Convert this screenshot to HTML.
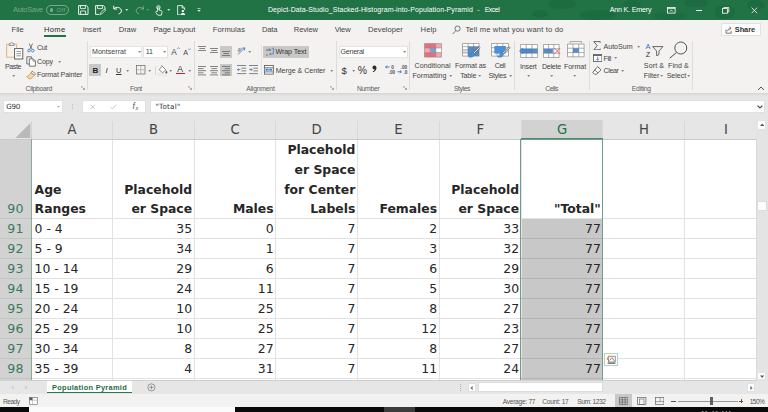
<!DOCTYPE html>
<html lang="en"><head><meta charset="utf-8"><title>Excel - Population Pyramid</title>
<style>
html,body{margin:0;padding:0;background:#f3f2f1;}
body{width:768px;height:412px;overflow:hidden;position:relative;}
#app{position:absolute;left:0;top:0;width:768px;height:412px;overflow:hidden;background:#f3f2f1;}
.b{position:absolute;display:block;}
.t{position:absolute;white-space:nowrap;display:block;}
.u{font-family:"Liberation Sans",sans-serif;}
.c{font-family:"DejaVu Sans","Liberation Sans",sans-serif;}
</style></head><body><div id="app">
<div class="b" style="left:0.0px;top:0.0px;width:768.0px;height:20.0px;background:#217346;"></div>
<div class="b" style="left:0.0px;top:20.0px;width:768.0px;height:72.6px;background:#f3f2f1;"></div>
<div class="b" style="left:0.0px;top:92.6px;width:768.0px;height:27.4px;background:#e6e6e6;"></div>
<div class="b" style="left:0.0px;top:92.6px;width:768.0px;height:3.0px;background:linear-gradient(#d4d4d4,#e6e6e6);"></div>
<svg class="b" style="left:520.0px;top:0.0px;" width="248" height="20" viewBox="0 0 248 20"><g fill="rgba(0,40,20,.10)"><ellipse cx="42" cy="4" rx="14" ry="5"/><ellipse cx="78" cy="15" rx="18" ry="5"/><ellipse cx="112" cy="5" rx="9" ry="6"/><ellipse cx="150" cy="16" rx="16" ry="4"/>
<ellipse cx="176" cy="3" rx="12" ry="4"/><ellipse cx="205" cy="12" rx="10" ry="7"/><ellipse cx="236" cy="5" rx="9" ry="5"/><ellipse cx="20" cy="14" rx="8" ry="4"/></g></svg>
<span class="t u" style="top:5px;font-size:7.4px;line-height:10px;color:rgba(255,255,255,.38);left:13.0px;letter-spacing:-0.26px;">AutoSave</span>
<div class="b" style="left:46.0px;top:5.2px;width:23.0px;height:9.4px;border:1px solid rgba(255,255,255,.38);box-sizing:border-box;border-radius:5px;"></div>
<div class="b" style="left:49.5px;top:8.2px;width:3.4px;height:3.4px;background:rgba(255,255,255,.4);border-radius:2px;"></div>
<span class="t u" style="top:6px;font-size:6px;line-height:8px;color:rgba(255,255,255,.38);left:56.5px;letter-spacing:0.37px;">Off</span>
<span class="t u" style="top:5px;font-size:7px;line-height:10px;color:#fff;left:267.9px;letter-spacing:0.09px;">Depict-Data-Studio_Stacked-Histogram-into-Population-Pyramid</span>
<span class="t u" style="top:5px;font-size:7px;line-height:10px;color:#fff;left:477.3px;">-</span>
<span class="t u" style="top:5px;font-size:7px;line-height:10px;color:#fff;left:484.7px;letter-spacing:-0.50px;">Excel</span>
<span class="t u" style="top:5px;font-size:7.2px;line-height:10px;color:#fff;left:609.7px;letter-spacing:-0.23px;">Ann K. Emery</span>
<div class="b" style="left:0.0px;top:120.0px;width:757.0px;height:19.3px;background:#e6e6e6;"></div>
<div class="b" style="left:31.0px;top:139.3px;width:726.0px;height:241.3px;background:#fff;"></div>
<div class="b" style="left:0.0px;top:139.3px;width:31.0px;height:241.3px;background:#d2d2d2;"></div>
<svg class="b" style="left:13.5px;top:120.5px;" width="17" height="18" viewBox="0 0 17 18"><path d="M16.4 2V17H1.4z" fill="#b9b9b9"/></svg>
<div class="b" style="left:30.5px;top:121.0px;width:1.0px;height:18.0px;background:#d4d4d4;"></div>
<div class="b" style="left:521.0px;top:120.0px;width:81.7px;height:19.3px;background:#d2d2d2;"></div>
<div class="b" style="left:521.0px;top:218.3px;width:81.7px;height:162.3px;background:#c8c8c8;"></div>
<div class="b" style="left:111.7px;top:139.3px;width:1.0px;height:241.3px;background:#e2e2e2;"></div>
<div class="b" style="left:111.7px;top:121.0px;width:1.0px;height:18.3px;background:#d8d8d8;"></div>
<div class="b" style="left:193.5px;top:139.3px;width:1.0px;height:241.3px;background:#e2e2e2;"></div>
<div class="b" style="left:193.5px;top:121.0px;width:1.0px;height:18.3px;background:#d8d8d8;"></div>
<div class="b" style="left:275.0px;top:139.3px;width:1.0px;height:241.3px;background:#e2e2e2;"></div>
<div class="b" style="left:275.0px;top:121.0px;width:1.0px;height:18.3px;background:#d8d8d8;"></div>
<div class="b" style="left:356.7px;top:139.3px;width:1.0px;height:241.3px;background:#e2e2e2;"></div>
<div class="b" style="left:356.7px;top:121.0px;width:1.0px;height:18.3px;background:#d8d8d8;"></div>
<div class="b" style="left:438.5px;top:139.3px;width:1.0px;height:241.3px;background:#e2e2e2;"></div>
<div class="b" style="left:438.5px;top:121.0px;width:1.0px;height:18.3px;background:#d8d8d8;"></div>
<div class="b" style="left:520.5px;top:139.3px;width:1.0px;height:241.3px;background:#e2e2e2;"></div>
<div class="b" style="left:520.5px;top:121.0px;width:1.0px;height:18.3px;background:#d8d8d8;"></div>
<div class="b" style="left:602.2px;top:139.3px;width:1.0px;height:241.3px;background:#e2e2e2;"></div>
<div class="b" style="left:602.2px;top:121.0px;width:1.0px;height:18.3px;background:#d8d8d8;"></div>
<div class="b" style="left:684.1px;top:139.3px;width:1.0px;height:241.3px;background:#e2e2e2;"></div>
<div class="b" style="left:684.1px;top:121.0px;width:1.0px;height:18.3px;background:#d8d8d8;"></div>
<div class="b" style="left:756.5px;top:139.3px;width:1.0px;height:241.3px;background:#e2e2e2;"></div>
<div class="b" style="left:756.5px;top:121.0px;width:1.0px;height:18.3px;background:#d8d8d8;"></div>
<div class="b" style="left:31.0px;top:217.8px;width:726.0px;height:1.0px;background:#e2e2e2;"></div>
<div class="b" style="left:0.0px;top:217.8px;width:31.0px;height:1.0px;background:#c3c3c3;"></div>
<div class="b" style="left:31.0px;top:237.8px;width:726.0px;height:1.0px;background:#e2e2e2;"></div>
<div class="b" style="left:0.0px;top:237.8px;width:31.0px;height:1.0px;background:#c3c3c3;"></div>
<div class="b" style="left:31.0px;top:257.8px;width:726.0px;height:1.0px;background:#e2e2e2;"></div>
<div class="b" style="left:0.0px;top:257.8px;width:31.0px;height:1.0px;background:#c3c3c3;"></div>
<div class="b" style="left:31.0px;top:277.8px;width:726.0px;height:1.0px;background:#e2e2e2;"></div>
<div class="b" style="left:0.0px;top:277.8px;width:31.0px;height:1.0px;background:#c3c3c3;"></div>
<div class="b" style="left:31.0px;top:297.8px;width:726.0px;height:1.0px;background:#e2e2e2;"></div>
<div class="b" style="left:0.0px;top:297.8px;width:31.0px;height:1.0px;background:#c3c3c3;"></div>
<div class="b" style="left:31.0px;top:317.8px;width:726.0px;height:1.0px;background:#e2e2e2;"></div>
<div class="b" style="left:0.0px;top:317.8px;width:31.0px;height:1.0px;background:#c3c3c3;"></div>
<div class="b" style="left:31.0px;top:337.8px;width:726.0px;height:1.0px;background:#e2e2e2;"></div>
<div class="b" style="left:0.0px;top:337.8px;width:31.0px;height:1.0px;background:#c3c3c3;"></div>
<div class="b" style="left:31.0px;top:357.8px;width:726.0px;height:1.0px;background:#e2e2e2;"></div>
<div class="b" style="left:0.0px;top:357.8px;width:31.0px;height:1.0px;background:#c3c3c3;"></div>
<div class="b" style="left:31.0px;top:377.8px;width:726.0px;height:1.0px;background:#e2e2e2;"></div>
<div class="b" style="left:0.0px;top:377.8px;width:31.0px;height:1.0px;background:#c3c3c3;"></div>
<div class="b" style="left:521.0px;top:237.8px;width:81.7px;height:1.0px;background:#b4b4b4;"></div>
<div class="b" style="left:521.0px;top:257.8px;width:81.7px;height:1.0px;background:#b4b4b4;"></div>
<div class="b" style="left:521.0px;top:277.8px;width:81.7px;height:1.0px;background:#b4b4b4;"></div>
<div class="b" style="left:521.0px;top:297.8px;width:81.7px;height:1.0px;background:#b4b4b4;"></div>
<div class="b" style="left:521.0px;top:317.8px;width:81.7px;height:1.0px;background:#b4b4b4;"></div>
<div class="b" style="left:521.0px;top:337.8px;width:81.7px;height:1.0px;background:#b4b4b4;"></div>
<div class="b" style="left:521.0px;top:357.8px;width:81.7px;height:1.0px;background:#b4b4b4;"></div>
<div class="b" style="left:521.0px;top:377.8px;width:81.7px;height:1.0px;background:#b4b4b4;"></div>
<div class="b" style="left:0.0px;top:138.8px;width:757.0px;height:1.0px;background:#c9c9c9;"></div>
<div class="b" style="left:30.5px;top:139.3px;width:1.0px;height:241.3px;background:#86ad98;"></div>
<div class="b" style="left:521.0px;top:138.3px;width:81.7px;height:1.2px;background:#4f8a6b;"></div>
<div class="b" style="left:520.3px;top:139.0px;width:82.8px;height:243.3px;border:1px solid #6f9e86;box-sizing:border-box;"></div>
<span class="t c" style="top:121px;font-size:13.2px;line-height:18px;color:#454545;left:67.4px;">A</span>
<span class="t c" style="top:121px;font-size:13.2px;line-height:18px;color:#454545;left:148.9px;">B</span>
<span class="t c" style="top:121px;font-size:13.2px;line-height:18px;color:#454545;left:230.4px;">C</span>
<span class="t c" style="top:121px;font-size:13.2px;line-height:18px;color:#454545;left:311.6px;">D</span>
<span class="t c" style="top:121px;font-size:13.2px;line-height:18px;color:#454545;left:394.2px;">E</span>
<span class="t c" style="top:121px;font-size:13.2px;line-height:18px;color:#454545;left:476.5px;">F</span>
<span class="t c" style="top:121px;font-size:13.2px;line-height:18px;color:#217346;left:557.0px;">G</span>
<span class="t c" style="top:121px;font-size:13.2px;line-height:18px;color:#454545;left:639.0px;">H</span>
<span class="t c" style="top:121px;font-size:13.2px;line-height:18px;color:#454545;left:723.9px;">I</span>
<span class="t c" style="top:200px;font-size:12.6px;line-height:17px;color:#3a7a5a;left:7.2px;letter-spacing:0.28px;">90</span>
<span class="t c" style="top:220px;font-size:12.6px;line-height:17px;color:#3a7a5a;left:7.2px;letter-spacing:0.28px;">91</span>
<span class="t c" style="top:240px;font-size:12.6px;line-height:17px;color:#3a7a5a;left:7.2px;letter-spacing:0.28px;">92</span>
<span class="t c" style="top:260px;font-size:12.6px;line-height:17px;color:#3a7a5a;left:7.2px;letter-spacing:0.28px;">93</span>
<span class="t c" style="top:280px;font-size:12.6px;line-height:17px;color:#3a7a5a;left:7.2px;letter-spacing:0.28px;">94</span>
<span class="t c" style="top:300px;font-size:12.6px;line-height:17px;color:#3a7a5a;left:7.2px;letter-spacing:0.28px;">95</span>
<span class="t c" style="top:320px;font-size:12.6px;line-height:17px;color:#3a7a5a;left:7.2px;letter-spacing:0.28px;">96</span>
<span class="t c" style="top:340px;font-size:12.6px;line-height:17px;color:#3a7a5a;left:7.2px;letter-spacing:0.28px;">97</span>
<span class="t c" style="top:360px;font-size:12.6px;line-height:17px;color:#3a7a5a;left:7.2px;letter-spacing:0.28px;">98</span>
<span class="t c" style="top:200px;font-size:12.4px;line-height:17px;color:#262626;left:34.6px;font-weight:700;">Ranges</span>
<span class="t c" style="top:181px;font-size:12.4px;line-height:17px;color:#262626;left:34.6px;font-weight:700;">Age</span>
<span class="t c" style="top:200px;font-size:12.4px;line-height:17px;color:#262626;right:575.9px;font-weight:700;">er Space</span>
<span class="t c" style="top:181px;font-size:12.4px;line-height:17px;color:#262626;right:575.9px;font-weight:700;">Placehold</span>
<span class="t c" style="top:200px;font-size:12.4px;line-height:17px;color:#262626;right:494.4px;font-weight:700;">Males</span>
<span class="t c" style="top:200px;font-size:12.4px;line-height:17px;color:#262626;right:412.7px;font-weight:700;">Labels</span>
<span class="t c" style="top:181px;font-size:12.4px;line-height:17px;color:#262626;right:412.7px;font-weight:700;">for Center</span>
<span class="t c" style="top:161px;font-size:12.4px;line-height:17px;color:#262626;right:412.7px;font-weight:700;">er Space</span>
<span class="t c" style="top:141px;font-size:12.4px;line-height:17px;color:#262626;right:412.7px;font-weight:700;">Placehold</span>
<span class="t c" style="top:200px;font-size:12.4px;line-height:17px;color:#262626;right:330.9px;font-weight:700;">Females</span>
<span class="t c" style="top:200px;font-size:12.4px;line-height:17px;color:#262626;right:248.9px;font-weight:700;">er Space</span>
<span class="t c" style="top:181px;font-size:12.4px;line-height:17px;color:#262626;right:248.9px;font-weight:700;">Placehold</span>
<span class="t c" style="top:200px;font-size:12.4px;line-height:17px;color:#262626;right:167.2px;font-weight:700;">&quot;Total&quot;</span>
<span class="t c" style="top:220px;font-size:12.4px;line-height:17px;color:#262626;left:34.6px;">0 - 4</span>
<span class="t c" style="top:220px;font-size:12.4px;line-height:17px;color:#262626;right:575.9px;">35</span>
<span class="t c" style="top:220px;font-size:12.4px;line-height:17px;color:#262626;right:494.4px;">0</span>
<span class="t c" style="top:220px;font-size:12.4px;line-height:17px;color:#262626;right:412.7px;">7</span>
<span class="t c" style="top:220px;font-size:12.4px;line-height:17px;color:#262626;right:330.9px;">2</span>
<span class="t c" style="top:220px;font-size:12.4px;line-height:17px;color:#262626;right:248.9px;">33</span>
<span class="t c" style="top:220px;font-size:12.4px;line-height:17px;color:#262626;right:167.2px;">77</span>
<span class="t c" style="top:240px;font-size:12.4px;line-height:17px;color:#262626;left:34.6px;">5 - 9</span>
<span class="t c" style="top:240px;font-size:12.4px;line-height:17px;color:#262626;right:575.9px;">34</span>
<span class="t c" style="top:240px;font-size:12.4px;line-height:17px;color:#262626;right:494.4px;">1</span>
<span class="t c" style="top:240px;font-size:12.4px;line-height:17px;color:#262626;right:412.7px;">7</span>
<span class="t c" style="top:240px;font-size:12.4px;line-height:17px;color:#262626;right:330.9px;">3</span>
<span class="t c" style="top:240px;font-size:12.4px;line-height:17px;color:#262626;right:248.9px;">32</span>
<span class="t c" style="top:240px;font-size:12.4px;line-height:17px;color:#262626;right:167.2px;">77</span>
<span class="t c" style="top:260px;font-size:12.4px;line-height:17px;color:#262626;left:34.6px;">10 - 14</span>
<span class="t c" style="top:260px;font-size:12.4px;line-height:17px;color:#262626;right:575.9px;">29</span>
<span class="t c" style="top:260px;font-size:12.4px;line-height:17px;color:#262626;right:494.4px;">6</span>
<span class="t c" style="top:260px;font-size:12.4px;line-height:17px;color:#262626;right:412.7px;">7</span>
<span class="t c" style="top:260px;font-size:12.4px;line-height:17px;color:#262626;right:330.9px;">6</span>
<span class="t c" style="top:260px;font-size:12.4px;line-height:17px;color:#262626;right:248.9px;">29</span>
<span class="t c" style="top:260px;font-size:12.4px;line-height:17px;color:#262626;right:167.2px;">77</span>
<span class="t c" style="top:280px;font-size:12.4px;line-height:17px;color:#262626;left:34.6px;">15 - 19</span>
<span class="t c" style="top:280px;font-size:12.4px;line-height:17px;color:#262626;right:575.9px;">24</span>
<span class="t c" style="top:280px;font-size:12.4px;line-height:17px;color:#262626;right:494.4px;">11</span>
<span class="t c" style="top:280px;font-size:12.4px;line-height:17px;color:#262626;right:412.7px;">7</span>
<span class="t c" style="top:280px;font-size:12.4px;line-height:17px;color:#262626;right:330.9px;">5</span>
<span class="t c" style="top:280px;font-size:12.4px;line-height:17px;color:#262626;right:248.9px;">30</span>
<span class="t c" style="top:280px;font-size:12.4px;line-height:17px;color:#262626;right:167.2px;">77</span>
<span class="t c" style="top:300px;font-size:12.4px;line-height:17px;color:#262626;left:34.6px;">20 - 24</span>
<span class="t c" style="top:300px;font-size:12.4px;line-height:17px;color:#262626;right:575.9px;">10</span>
<span class="t c" style="top:300px;font-size:12.4px;line-height:17px;color:#262626;right:494.4px;">25</span>
<span class="t c" style="top:300px;font-size:12.4px;line-height:17px;color:#262626;right:412.7px;">7</span>
<span class="t c" style="top:300px;font-size:12.4px;line-height:17px;color:#262626;right:330.9px;">8</span>
<span class="t c" style="top:300px;font-size:12.4px;line-height:17px;color:#262626;right:248.9px;">27</span>
<span class="t c" style="top:300px;font-size:12.4px;line-height:17px;color:#262626;right:167.2px;">77</span>
<span class="t c" style="top:320px;font-size:12.4px;line-height:17px;color:#262626;left:34.6px;">25 - 29</span>
<span class="t c" style="top:320px;font-size:12.4px;line-height:17px;color:#262626;right:575.9px;">10</span>
<span class="t c" style="top:320px;font-size:12.4px;line-height:17px;color:#262626;right:494.4px;">25</span>
<span class="t c" style="top:320px;font-size:12.4px;line-height:17px;color:#262626;right:412.7px;">7</span>
<span class="t c" style="top:320px;font-size:12.4px;line-height:17px;color:#262626;right:330.9px;">12</span>
<span class="t c" style="top:320px;font-size:12.4px;line-height:17px;color:#262626;right:248.9px;">23</span>
<span class="t c" style="top:320px;font-size:12.4px;line-height:17px;color:#262626;right:167.2px;">77</span>
<span class="t c" style="top:340px;font-size:12.4px;line-height:17px;color:#262626;left:34.6px;">30 - 34</span>
<span class="t c" style="top:340px;font-size:12.4px;line-height:17px;color:#262626;right:575.9px;">8</span>
<span class="t c" style="top:340px;font-size:12.4px;line-height:17px;color:#262626;right:494.4px;">27</span>
<span class="t c" style="top:340px;font-size:12.4px;line-height:17px;color:#262626;right:412.7px;">7</span>
<span class="t c" style="top:340px;font-size:12.4px;line-height:17px;color:#262626;right:330.9px;">8</span>
<span class="t c" style="top:340px;font-size:12.4px;line-height:17px;color:#262626;right:248.9px;">27</span>
<span class="t c" style="top:340px;font-size:12.4px;line-height:17px;color:#262626;right:167.2px;">77</span>
<span class="t c" style="top:360px;font-size:12.4px;line-height:17px;color:#262626;left:34.6px;">35 - 39</span>
<span class="t c" style="top:360px;font-size:12.4px;line-height:17px;color:#262626;right:575.9px;">4</span>
<span class="t c" style="top:360px;font-size:12.4px;line-height:17px;color:#262626;right:494.4px;">31</span>
<span class="t c" style="top:360px;font-size:12.4px;line-height:17px;color:#262626;right:412.7px;">7</span>
<span class="t c" style="top:360px;font-size:12.4px;line-height:17px;color:#262626;right:330.9px;">11</span>
<span class="t c" style="top:360px;font-size:12.4px;line-height:17px;color:#262626;right:248.9px;">24</span>
<span class="t c" style="top:360px;font-size:12.4px;line-height:17px;color:#262626;right:167.2px;">77</span>
<span class="t u" style="top:25px;font-size:7.6px;line-height:10px;color:#444;left:11.6px;letter-spacing:-0.04px;">File</span>
<span class="t u" style="top:25px;font-size:7.6px;line-height:10px;color:#2b2b2b;left:44.0px;letter-spacing:0.33px;">Home</span>
<span class="t u" style="top:25px;font-size:7.6px;line-height:10px;color:#444;left:82.8px;letter-spacing:-0.13px;">Insert</span>
<span class="t u" style="top:25px;font-size:7.6px;line-height:10px;color:#444;left:118.8px;letter-spacing:-0.13px;">Draw</span>
<span class="t u" style="top:25px;font-size:7.6px;line-height:10px;color:#444;left:153.5px;letter-spacing:-0.08px;">Page Layout</span>
<span class="t u" style="top:25px;font-size:7.6px;line-height:10px;color:#444;left:212.8px;letter-spacing:0.07px;">Formulas</span>
<span class="t u" style="top:25px;font-size:7.6px;line-height:10px;color:#444;left:261.9px;letter-spacing:-0.16px;">Data</span>
<span class="t u" style="top:25px;font-size:7.6px;line-height:10px;color:#444;left:293.8px;letter-spacing:-0.15px;">Review</span>
<span class="t u" style="top:25px;font-size:7.6px;line-height:10px;color:#444;left:334.7px;letter-spacing:-0.11px;">View</span>
<span class="t u" style="top:25px;font-size:7.6px;line-height:10px;color:#444;left:368.1px;letter-spacing:0.01px;">Developer</span>
<span class="t u" style="top:25px;font-size:7.6px;line-height:10px;color:#444;left:420.6px;letter-spacing:0.09px;">Help</span>
<div class="b" style="left:43.5px;top:35.2px;width:22.5px;height:1.6px;background:#217346;"></div>
<span class="t u" style="top:25px;font-size:7.6px;line-height:10px;color:#444;left:465.4px;letter-spacing:0.16px;">Tell me what you want to do</span>
<svg class="b" style="left:451.5px;top:24.5px;" width="9" height="10" viewBox="0 0 9 10"><circle cx="5.6" cy="3.6" r="2.6" fill="none" stroke="#555" stroke-width=".8"/><path d="M3.8 5.6L0.8 9" stroke="#555" stroke-width=".8" fill="none"/></svg>
<div class="b" style="left:721.0px;top:23.2px;width:40.0px;height:12.8px;background:#fdfdfd;border:1px solid #e1e1e1;box-sizing:border-box;"></div>
<span class="t u" style="top:25px;font-size:7.4px;line-height:10px;color:#333;left:734.8px;font-weight:700;letter-spacing:-0.07px;">Share</span>
<svg class="b" style="left:724.5px;top:25.5px;" width="8" height="8" viewBox="0 0 8 8"><path d="M1 3.5v3.7h5.2V5" fill="none" stroke="#555" stroke-width=".8"/><path d="M2.6 5.2C2.8 3.4 4 2.5 5.6 2.4M4.4 0.9l1.7 1.5-1.7 1.5" fill="none" stroke="#555" stroke-width=".8"/></svg>
<div class="b" style="left:87.3px;top:41.0px;width:0.9px;height:49.0px;background:#dcdcdc;"></div>
<div class="b" style="left:193.8px;top:41.0px;width:0.9px;height:49.0px;background:#dcdcdc;"></div>
<div class="b" style="left:335.7px;top:41.0px;width:0.9px;height:49.0px;background:#dcdcdc;"></div>
<div class="b" style="left:409.1px;top:41.0px;width:0.9px;height:49.0px;background:#dcdcdc;"></div>
<div class="b" style="left:514.1px;top:41.0px;width:0.9px;height:49.0px;background:#dcdcdc;"></div>
<div class="b" style="left:589.1px;top:41.0px;width:0.9px;height:49.0px;background:#dcdcdc;"></div>
<div class="b" style="left:692.4px;top:41.0px;width:0.9px;height:49.0px;background:#dcdcdc;"></div>
<div class="b" style="left:261.4px;top:45.0px;width:0.8px;height:30.0px;background:#e2e2e2;"></div>
<span class="t u" style="top:84px;font-size:6.8px;line-height:9px;color:#5a5a5a;left:25.6px;letter-spacing:-0.30px;">Clipboard</span>
<span class="t u" style="top:84px;font-size:6.8px;line-height:9px;color:#5a5a5a;left:130.0px;letter-spacing:-0.50px;">Font</span>
<span class="t u" style="top:84px;font-size:6.8px;line-height:9px;color:#5a5a5a;left:246.2px;letter-spacing:-0.20px;">Alignment</span>
<span class="t u" style="top:84px;font-size:6.8px;line-height:9px;color:#5a5a5a;left:356.9px;letter-spacing:-0.28px;">Number</span>
<span class="t u" style="top:84px;font-size:6.8px;line-height:9px;color:#5a5a5a;left:454.0px;letter-spacing:-0.42px;">Styles</span>
<span class="t u" style="top:84px;font-size:6.8px;line-height:9px;color:#5a5a5a;left:545.3px;letter-spacing:-0.48px;">Cells</span>
<span class="t u" style="top:84px;font-size:6.8px;line-height:9px;color:#5a5a5a;left:631.8px;letter-spacing:-0.24px;">Editing</span>
<svg class="b" style="left:81.0px;top:86.4px;" width="4" height="4" viewBox="0 0 4 4"><path d="M0.3 1.6V0.3H1.6M1.4 1.4L3.5 3.5M3.6 1.8V3.6H1.8" fill="none" stroke="#777" stroke-width=".6"/></svg>
<svg class="b" style="left:187.6px;top:86.4px;" width="4" height="4" viewBox="0 0 4 4"><path d="M0.3 1.6V0.3H1.6M1.4 1.4L3.5 3.5M3.6 1.8V3.6H1.8" fill="none" stroke="#777" stroke-width=".6"/></svg>
<svg class="b" style="left:330.0px;top:86.4px;" width="4" height="4" viewBox="0 0 4 4"><path d="M0.3 1.6V0.3H1.6M1.4 1.4L3.5 3.5M3.6 1.8V3.6H1.8" fill="none" stroke="#777" stroke-width=".6"/></svg>
<svg class="b" style="left:403.2px;top:86.4px;" width="4" height="4" viewBox="0 0 4 4"><path d="M0.3 1.6V0.3H1.6M1.4 1.4L3.5 3.5M3.6 1.8V3.6H1.8" fill="none" stroke="#777" stroke-width=".6"/></svg>
<svg class="b" style="left:756.5px;top:85.6px;" width="8" height="5" viewBox="0 0 8 5"><path d="M1 4L4 1L7 4" fill="none" stroke="#555" stroke-width="1"/></svg>
<svg class="b" style="left:5.0px;top:41.0px;" width="19" height="19" viewBox="0 0 19 19"><path d="M3.6 3.2H1.6V16.2H9" fill="none" stroke="#e8b87a" stroke-width="1.1"/><path d="M9.4 3.2H11.6V7" fill="none" stroke="#e8b87a" stroke-width="1.1"/>
<path d="M4 4.4V2.8H5.2C5.2 1.2 8 1.2 8 2.8H9.2V4.4z" fill="#f3f3f3" stroke="#777" stroke-width=".8"/>
<rect x="9.6" y="7.6" width="8.2" height="10.4" fill="#fff" stroke="#555" stroke-width=".9"/>
<path d="M11.4 10.4h4.6M11.4 12.6h4.6M11.4 14.8h4.6" stroke="#666" stroke-width=".7"/></svg>
<span class="t u" style="top:62px;font-size:7.1px;line-height:10px;color:#444;left:5.0px;letter-spacing:-0.43px;">Paste</span>
<svg class="b" style="left:11.5px;top:74.6px;" width="3.4" height="2.1" viewBox="0 0 3.4 2.1"><path d="M0.2 0.2h3.0l-1.5 1.5z" fill="#666"/></svg>
<svg class="b" style="left:27.0px;top:42.5px;" width="8" height="10" viewBox="0 0 8 10"><path d="M2.2 0.6L5 6.2M5.6 0.6L2.8 6.2" stroke="#555" stroke-width=".8" fill="none"/>
<circle cx="2" cy="7.6" r="1.3" fill="none" stroke="#2e75c8" stroke-width=".8"/><circle cx="5.8" cy="7.6" r="1.3" fill="none" stroke="#2e75c8" stroke-width=".8"/></svg>
<span class="t u" style="top:43px;font-size:7.1px;line-height:10px;color:#444;left:37.0px;letter-spacing:-0.35px;">Cut</span>
<svg class="b" style="left:26.0px;top:55.5px;" width="11" height="11" viewBox="0 0 11 11"><path d="M0.8 0.8H5.6V2.6M0.8 0.8V8H3" fill="none" stroke="#555" stroke-width=".8"/>
<path d="M3.4 2.8H7.2L9.4 5V10.2H3.4z" fill="#fff" stroke="#555" stroke-width=".8"/><path d="M7 3V5.2H9.2" fill="none" stroke="#555" stroke-width=".6"/></svg>
<span class="t u" style="top:57px;font-size:7.1px;line-height:10px;color:#444;left:37.0px;letter-spacing:-0.14px;">Copy</span>
<svg class="b" style="left:58.1px;top:60.8px;" width="3.4" height="2.1" viewBox="0 0 3.4 2.1"><path d="M0.2 0.2h3.0l-1.5 1.5z" fill="#666"/></svg>
<svg class="b" style="left:26.0px;top:69.5px;" width="11" height="10" viewBox="0 0 11 10"><path d="M6.2 1.2L9.6 3.8L8.4 5.2L5 2.6z" fill="#fff" stroke="#555" stroke-width=".7"/>
<path d="M5 2.8L8.2 5.4L5.4 8.6C4 9.4 2 8.6 0.8 6.4C2.4 6.2 3.6 4.6 5 2.8z" fill="#f3d9a8" stroke="#c8913c" stroke-width=".7"/></svg>
<span class="t u" style="top:70px;font-size:7.1px;line-height:10px;color:#444;left:37.0px;letter-spacing:-0.12px;">Format Painter</span>
<div class="b" style="left:89.9px;top:46.1px;width:52.0px;height:11.6px;background:#fff;border:1px solid #e4e4e4;box-sizing:border-box;"></div>
<div class="b" style="left:142.7px;top:46.1px;width:25.6px;height:11.6px;background:#fff;border:1px solid #e4e4e4;box-sizing:border-box;"></div>
<span class="t u" style="top:47px;font-size:7.1px;line-height:10px;color:#444;left:92.0px;letter-spacing:0.01px;">Montserrat</span>
<svg class="b" style="left:137.6px;top:51.0px;" width="3.4" height="2.1" viewBox="0 0 3.4 2.1"><path d="M0.2 0.2h3.0l-1.5 1.5z" fill="#666"/></svg>
<span class="t u" style="top:47px;font-size:7.1px;line-height:10px;color:#444;left:145.8px;letter-spacing:-0.19px;">11</span>
<svg class="b" style="left:162.7px;top:51.0px;" width="3.4" height="2.1" viewBox="0 0 3.4 2.1"><path d="M0.2 0.2h3.0l-1.5 1.5z" fill="#666"/></svg>
<span class="t u" style="top:47px;font-size:8.2px;line-height:11px;color:#444;left:171.3px;">A</span>
<svg class="b" style="left:176.6px;top:47.4px;" width="3" height="2.4" viewBox="0 0 3 2.4"><path d="M0.3 2L1.5 0.5L2.7 2" fill="none" stroke="#2e75c8" stroke-width=".6"/></svg>
<span class="t u" style="top:48px;font-size:7.2px;line-height:10px;color:#444;left:183.2px;">A</span>
<svg class="b" style="left:188.0px;top:47.6px;" width="3" height="2.4" viewBox="0 0 3 2.4"><path d="M0.3 0.5L1.5 2L2.7 0.5" fill="none" stroke="#2e75c8" stroke-width=".6"/></svg>
<div class="b" style="left:89.4px;top:64.3px;width:11.8px;height:12.2px;background:#c8c8c8;"></div>
<span class="t u" style="top:65px;font-size:8px;line-height:11px;color:#222;left:92.6px;font-weight:700;">B</span>
<span class="t u" style="top:65px;font-size:8px;line-height:11px;color:#333;left:105.6px;font-style:italic;font-family:"Liberation Serif",serif;">I</span>
<span class="t u" style="top:66px;font-size:7.6px;line-height:10px;color:#333;left:116.0px;text-decoration:underline;">U</span>
<svg class="b" style="left:126.3px;top:69.5px;" width="3.4" height="2.1" viewBox="0 0 3.4 2.1"><path d="M0.2 0.2h3.0l-1.5 1.5z" fill="#666"/></svg>
<svg class="b" style="left:135.6px;top:65.2px;" width="10" height="10" viewBox="0 0 10 10"><rect x=".6" y=".6" width="8.4" height="8.4" fill="none" stroke="#666" stroke-width=".7"/><path d="M4.8 .6V9M.6 4.8H9" stroke="#666" stroke-width=".6" stroke-dasharray="1 .7"/></svg>
<svg class="b" style="left:148.0px;top:69.5px;" width="3.4" height="2.1" viewBox="0 0 3.4 2.1"><path d="M0.2 0.2h3.0l-1.5 1.5z" fill="#666"/></svg>
<div class="b" style="left:154.8px;top:65.5px;width:0.7px;height:9.5px;background:#d9d9d9;"></div>
<svg class="b" style="left:157.6px;top:64.6px;" width="10" height="11" viewBox="0 0 10 11"><path d="M4.2 1.2L7.8 4.8L4.6 7.8L1.2 4.6z" fill="#fff" stroke="#555" stroke-width=".7"/><path d="M4.2 1.2L3.4 0.4" stroke="#555" stroke-width=".7"/>
<path d="M8.4 5.6C8.4 5.6 9.4 7 9.4 7.6C9.4 8.2 8.9 8.6 8.4 8.6C7.9 8.6 7.4 8.2 7.4 7.6C7.4 7 8.4 5.6 8.4 5.6z" fill="#555"/>
<rect x=".6" y="8.9" width="8" height="1.5" fill="#f3f3f3" stroke="#d5d5d5" stroke-width=".4"/></svg>
<svg class="b" style="left:169.3px;top:69.5px;" width="3.4" height="2.1" viewBox="0 0 3.4 2.1"><path d="M0.2 0.2h3.0l-1.5 1.5z" fill="#666"/></svg>
<span class="t u" style="top:63px;font-size:8.6px;line-height:12px;color:#333;left:177.2px;">A</span>
<div class="b" style="left:176.0px;top:72.5px;width:8.8px;height:1.7px;background:#e0141e;"></div>
<svg class="b" style="left:187.6px;top:69.5px;" width="3.4" height="2.1" viewBox="0 0 3.4 2.1"><path d="M0.2 0.2h3.0l-1.5 1.5z" fill="#666"/></svg>
<div class="b" style="left:220.3px;top:45.6px;width:11.7px;height:12.2px;background:#c8c8c8;"></div>
<div class="b" style="left:220.3px;top:64.1px;width:11.7px;height:12.2px;background:#c8c8c8;"></div>
<svg class="b" style="left:197.8px;top:46.2px;" width="8.4" height="7.0" viewBox="0 0 8.4 7.0"><path d="M0.0 0.5h8.4M1.4 2.5h5.6M0.0 4.5h8.4" stroke="#666" stroke-width="0.8" fill="none"/></svg>
<svg class="b" style="left:209.9px;top:48.0px;" width="8.4" height="7.0" viewBox="0 0 8.4 7.0"><path d="M0.0 0.5h8.4M1.4 2.5h5.6M0.0 4.5h8.4" stroke="#666" stroke-width="0.8" fill="none"/></svg>
<svg class="b" style="left:222.0px;top:50.9px;" width="8.4" height="7.0" viewBox="0 0 8.4 7.0"><path d="M0.0 0.5h8.4M1.4 2.5h5.6M0.0 4.5h8.4" stroke="#666" stroke-width="0.8" fill="none"/></svg>
<svg class="b" style="left:197.8px;top:65.6px;" width="8.4" height="11.5" viewBox="0 0 8.4 11.5"><path d="M0.0 0.5h8.4M0.0 2.6h5.6M0.0 4.7h8.4M0.0 6.8h5.6M0.0 8.9h8.4" stroke="#666" stroke-width="0.8" fill="none"/></svg>
<svg class="b" style="left:209.9px;top:65.6px;" width="8.4" height="11.5" viewBox="0 0 8.4 11.5"><path d="M0.0 0.5h8.4M1.4 2.6h5.6M0.0 4.7h8.4M1.4 6.8h5.6M0.0 8.9h8.4" stroke="#666" stroke-width="0.8" fill="none"/></svg>
<svg class="b" style="left:222.0px;top:65.6px;" width="8.4" height="11.5" viewBox="0 0 8.4 11.5"><path d="M0.0 0.5h8.4M2.8 2.6h5.6M0.0 4.7h8.4M2.8 6.8h5.6M0.0 8.9h8.4" stroke="#666" stroke-width="0.8" fill="none"/></svg>
<svg class="b" style="left:237.0px;top:45.5px;" width="10" height="10" viewBox="0 0 10 10"><path d="M1 8.6L7.6 2M7.8 1.8L5.2 2.2M7.8 1.8L7.4 4.4" stroke="#2e75c8" stroke-width=".8" fill="none"/>
<text x="0.2" y="5.2" font-family="Liberation Sans,sans-serif" font-size="4.6" fill="#555" transform="rotate(-45 2.5 4)">ab</text></svg>
<svg class="b" style="left:248.1px;top:51.0px;" width="3.4" height="2.1" viewBox="0 0 3.4 2.1"><path d="M0.2 0.2h3.0l-1.5 1.5z" fill="#666"/></svg>
<svg class="b" style="left:237.2px;top:65.4px;" width="9.4" height="10" viewBox="0 0 9.4 10"><path d="M0 0.5H9.2M4.4 3.2H9.2M4.4 5.9H9.2M0 8.6H9.2" stroke="#666" stroke-width=".8" fill="none"/><path d="M3.4 4.6H0.4M1.6 3.4L0.4 4.6L1.6 5.8" stroke="#2e75c8" stroke-width=".8" fill="none"/></svg>
<svg class="b" style="left:249.0px;top:65.4px;" width="9.4" height="10" viewBox="0 0 9.4 10"><path d="M0 0.5H9.2M4.4 3.2H9.2M4.4 5.9H9.2M0 8.6H9.2" stroke="#666" stroke-width=".8" fill="none"/><path d="M0.2 4.6H3.2M2 3.4L3.2 4.6L2 5.8" stroke="#2e75c8" stroke-width=".8" fill="none"/></svg>
<div class="b" style="left:263.3px;top:45.6px;width:45.9px;height:12.2px;background:#c8c8c8;"></div>
<svg class="b" style="left:266.0px;top:46.8px;" width="8.4" height="10" viewBox="0 0 8.4 10"><text x="0" y="4" font-family="Liberation Sans,sans-serif" font-size="4.4" fill="#444">ab</text><text x="0" y="9" font-family="Liberation Sans,sans-serif" font-size="4.4" fill="#444">c</text>
<path d="M5.6 1.2H7.4V7H3.6M4.8 5.8L3.6 7L4.8 8.2" stroke="#2e75c8" stroke-width=".7" fill="none"/></svg>
<span class="t u" style="top:47px;font-size:7.1px;line-height:10px;color:#333;left:275.4px;letter-spacing:-0.07px;">Wrap Text</span>
<svg class="b" style="left:264.2px;top:64.6px;" width="10" height="10" viewBox="0 0 10 10"><rect x=".5" y=".5" width="8.8" height="8.6" fill="#fff" stroke="#555" stroke-width=".8"/><rect x=".9" y="2.8" width="8" height="4" fill="#bcd7f2"/>
<path d="M.5 2.6H9.3M.5 7H9.3" stroke="#555" stroke-width=".6"/><path d="M2 4.8H7.8M3.2 3.8L2 4.8L3.2 5.8M6.6 3.8L7.8 4.8L6.6 5.8" stroke="#1f5fa8" stroke-width=".7" fill="none"/></svg>
<span class="t u" style="top:66px;font-size:7.1px;line-height:10px;color:#444;left:275.7px;letter-spacing:-0.03px;">Merge &amp; Center</span>
<svg class="b" style="left:329.6px;top:69.5px;" width="3.4" height="2.1" viewBox="0 0 3.4 2.1"><path d="M0.2 0.2h3.0l-1.5 1.5z" fill="#666"/></svg>
<div class="b" style="left:338.5px;top:45.6px;width:69.1px;height:12.2px;background:#fff;border:1px solid #e4e4e4;box-sizing:border-box;"></div>
<span class="t u" style="top:47px;font-size:7.1px;line-height:10px;color:#444;left:340.6px;letter-spacing:-0.28px;">General</span>
<svg class="b" style="left:402.5px;top:51.0px;" width="3.4" height="2.1" viewBox="0 0 3.4 2.1"><path d="M0.2 0.2h3.0l-1.5 1.5z" fill="#666"/></svg>
<span class="t u" style="top:64px;font-size:9.6px;line-height:13px;color:#333;left:341.6px;">$</span>
<svg class="b" style="left:351.6px;top:69.5px;" width="3.4" height="2.1" viewBox="0 0 3.4 2.1"><path d="M0.2 0.2h3.0l-1.5 1.5z" fill="#666"/></svg>
<span class="t u" style="top:64px;font-size:10.4px;line-height:14px;color:#333;left:357.8px;">%</span>
<svg class="b" style="left:372.2px;top:65.4px;" width="5" height="8" viewBox="0 0 5 8"><path d="M2.4 0.4C3.7 0.4 4.5 1.3 4.5 2.8C4.5 4.8 3.2 6.4 1 7.2L0.7 6.6C1.9 6 2.6 5.2 2.7 4.3C1.5 4.5 0.5 3.7 0.5 2.4C0.5 1.2 1.3 0.4 2.4 0.4z" fill="#2a2a2a"/></svg>
<svg class="b" style="left:385.0px;top:64.8px;" width="10.4" height="10.4" viewBox="0 0 10.4 10.4"><path d="M4.6 2H0.6M2 0.6L0.6 2L2 3.4" stroke="#2e75c8" stroke-width=".9" fill="none"/><text x="6.2" y="4.2" font-family="Liberation Sans,sans-serif" font-size="4.8" font-weight="700" fill="#555">0</text><text x="3.6" y="9.4" font-family="Liberation Sans,sans-serif" font-size="4.8" font-weight="700" fill="#555">.00</text></svg>
<svg class="b" style="left:397.4px;top:64.8px;" width="10.4" height="10.4" viewBox="0 0 10.4 10.4"><path d="M0.4 6.8H4.4M3 5.4L4.4 6.8L3 8.2" stroke="#2e75c8" stroke-width=".9" fill="none"/><text x="3.6" y="4.2" font-family="Liberation Sans,sans-serif" font-size="4.8" font-weight="700" fill="#555">.00</text><text x="6.4" y="9.4" font-family="Liberation Sans,sans-serif" font-size="4.8" font-weight="700" fill="#555">.0</text></svg>
<svg class="b" style="left:424.2px;top:43.0px;" width="18" height="14.6" viewBox="0 0 18 14.6"><rect x=".5" y=".5" width="17" height="13.6" fill="#fff"/>
<rect x=".5" y=".5" width="11.4" height="4.5" fill="#ee6b7a"/><rect x="11.9" y=".5" width="5.6" height="4.5" fill="#f5a6b0"/>
<rect x=".5" y="5" width="5.7" height="4.6" fill="#f5a6b0"/><rect x="6.2" y="5" width="5.7" height="4.6" fill="#6fa3d8"/>
<rect x=".5" y="9.6" width="11.4" height="4.5" fill="#ee6b7a"/><rect x="11.9" y="9.6" width="5.6" height="4.5" fill="#f5a6b0"/><path d="M0.50 0.5V14.1M6.17 0.5V14.1M11.83 0.5V14.1M17.50 0.5V14.1M0.5 0.50H17.5M0.5 5.03H17.5M0.5 9.57H17.5M0.5 14.10H17.5" stroke="#8a8a8a" stroke-width="0.6" fill="none"/></svg>
<span class="t u" style="top:61px;font-size:7.1px;line-height:10px;color:#444;left:414.6px;letter-spacing:0.04px;">Conditional</span>
<span class="t u" style="top:71px;font-size:7.1px;line-height:10px;color:#444;left:412.5px;letter-spacing:0.01px;">Formatting</span>
<svg class="b" style="left:448.6px;top:74.6px;" width="3.4" height="2.1" viewBox="0 0 3.4 2.1"><path d="M0.2 0.2h3.0l-1.5 1.5z" fill="#666"/></svg>
<svg class="b" style="left:462.2px;top:43.0px;" width="19" height="17" viewBox="0 0 19 17"><rect x=".5" y=".5" width="16.6" height="12.6" fill="#fff"/><rect x="6" y="3.6" width="11" height="9.4" fill="#4a90d9"/><rect x=".5" y="6.8" width="5.5" height="3.2" fill="#d5e6f7"/><path d="M0.50 0.5V13.1M6.03 0.5V13.1M11.57 0.5V13.1M17.10 0.5V13.1M0.5 0.50H17.1M0.5 3.65H17.1M0.5 6.80H17.1M0.5 9.95H17.1M0.5 13.10H17.1" stroke="#777" stroke-width="0.6" fill="none"/><path d="M17.4 4.6L11.6 10.4" stroke="#6e6e6e" stroke-width="2" fill="none" stroke-linecap="round"/><path d="M17.4 4.6L11.6 10.4" stroke="#efe4cf" stroke-width="1" fill="none" stroke-linecap="round"/><path d="M11.8 9.8C10.2 9.4 8.6 10.6 8.4 12.2C7.6 13.2 6.6 13.4 6 13.4C7.6 14.8 10.6 14.6 11.8 13C12.6 11.8 12.6 10.6 11.8 9.8z" fill="#4a90d9" stroke="#2b6cb5" stroke-width=".3"/></svg>
<span class="t u" style="top:61px;font-size:7.1px;line-height:10px;color:#444;left:455.0px;letter-spacing:-0.11px;">Format as</span>
<span class="t u" style="top:71px;font-size:7.1px;line-height:10px;color:#444;left:460.2px;letter-spacing:-0.19px;">Table</span>
<svg class="b" style="left:478.3px;top:74.6px;" width="3.4" height="2.1" viewBox="0 0 3.4 2.1"><path d="M0.2 0.2h3.0l-1.5 1.5z" fill="#666"/></svg>
<svg class="b" style="left:491.0px;top:43.0px;" width="20" height="17" viewBox="0 0 20 17"><rect x=".5" y=".5" width="17" height="12.6" fill="#fff"/><rect x="3.6" y="3" width="11" height="7.4" fill="#4a90d9"/><path d="M0.50 0.5V13.1M6.17 0.5V13.1M11.83 0.5V13.1M17.50 0.5V13.1M0.5 0.50H17.5M0.5 4.70H17.5M0.5 8.90H17.5M0.5 13.10H17.5" stroke="#777" stroke-width="0.6" fill="none"/><rect x="3.6" y="3" width="11" height="7.4" fill="#4a90d9"/><path d="M18.4 4.6L11.6 10.4" stroke="#6e6e6e" stroke-width="2" fill="none" stroke-linecap="round"/><path d="M18.4 4.6L11.6 10.4" stroke="#efe4cf" stroke-width="1" fill="none" stroke-linecap="round"/><path d="M11.8 9.8C10.2 9.4 8.6 10.6 8.4 12.2C7.6 13.2 6.6 13.4 6 13.4C7.6 14.8 10.6 14.6 11.8 13C12.6 11.8 12.6 10.6 11.8 9.8z" fill="#4a90d9" stroke="#2b6cb5" stroke-width=".3"/></svg>
<span class="t u" style="top:61px;font-size:7.1px;line-height:10px;color:#444;left:494.8px;letter-spacing:-0.51px;">Cell</span>
<span class="t u" style="top:71px;font-size:7.1px;line-height:10px;color:#444;left:488.6px;letter-spacing:-0.29px;">Styles</span>
<svg class="b" style="left:508.5px;top:74.6px;" width="3.4" height="2.1" viewBox="0 0 3.4 2.1"><path d="M0.2 0.2h3.0l-1.5 1.5z" fill="#666"/></svg>
<svg class="b" style="left:518.6px;top:43.5px;" width="19.4" height="14" viewBox="0 0 19.4 14"><rect x="1.6" y=".5" width="17" height="13" fill="#fff"/><rect x="1.6" y="4.8" width="17" height="4.4" fill="#4a90d9"/><path d="M1.6 .5H18.6V13.5H1.6zM1.6 4.8H18.6M1.6 9.2H18.6M7.2 .5V13.5M13 .5V13.5" stroke="#777" stroke-width=".6" fill="none"/><path d="M0.3 7L3.6 4.2V5.8H12V8.2H3.6V9.8z" fill="#4a90d9" stroke="#2b6cb5" stroke-width=".4"/></svg>
<span class="t u" style="top:62px;font-size:7.1px;line-height:10px;color:#444;left:520.0px;letter-spacing:-0.18px;">Insert</span>
<svg class="b" style="left:526.5px;top:74.6px;" width="3.4" height="2.1" viewBox="0 0 3.4 2.1"><path d="M0.2 0.2h3.0l-1.5 1.5z" fill="#666"/></svg>
<svg class="b" style="left:543.0px;top:43.5px;" width="18" height="14" viewBox="0 0 18 14"><rect x=".5" y=".5" width="15.6" height="13" fill="#fff"/><rect x=".5" y="4.8" width="9.4" height="4.4" fill="#4a90d9"/><path d="M.5 .5H16.1V13.5H.5zM.5 4.8H16.1M.5 9.2H16.1M5.6 .5V13.5M10.8 .5V13.5" stroke="#777" stroke-width=".6" fill="none"/><path d="M11.4 4L17.2 10M17.2 4L11.4 10" stroke="#e4606c" stroke-width=".9" fill="none"/></svg>
<span class="t u" style="top:62px;font-size:7.1px;line-height:10px;color:#444;left:541.9px;letter-spacing:-0.22px;">Delete</span>
<svg class="b" style="left:549.5px;top:74.6px;" width="3.4" height="2.1" viewBox="0 0 3.4 2.1"><path d="M0.2 0.2h3.0l-1.5 1.5z" fill="#666"/></svg>
<svg class="b" style="left:566.7px;top:41.2px;" width="18" height="16.4" viewBox="0 0 18 16.4"><path d="M3.2 2.4V.5H14.4V2.4" stroke="#777" stroke-width=".6" fill="none"/><rect x=".5" y="3" width="16.6" height="12.8" fill="#fff"/><rect x="6" y="7.2" width="5.8" height="4.4" fill="#4a90d9"/><path d="M.5 3H17.1V15.8H.5zM.5 7.2H17.1M.5 11.6H17.1M6 3V15.8M11.8 3V15.8" stroke="#777" stroke-width=".6" fill="none"/></svg>
<span class="t u" style="top:62px;font-size:7.1px;line-height:10px;color:#444;left:563.9px;letter-spacing:-0.05px;">Format</span>
<svg class="b" style="left:573.3px;top:74.6px;" width="3.4" height="2.1" viewBox="0 0 3.4 2.1"><path d="M0.2 0.2h3.0l-1.5 1.5z" fill="#666"/></svg>
<svg class="b" style="left:593.4px;top:40.8px;" width="8" height="9.4" viewBox="0 0 8 9.4"><path d="M7.2 1.8V0.6H0.8L4.2 4.7L0.8 8.8H7.2V7.6" stroke="#444" stroke-width=".8" fill="none"/></svg>
<span class="t u" style="top:42px;font-size:7.1px;line-height:10px;color:#444;left:603.5px;letter-spacing:-0.01px;">AutoSum</span>
<svg class="b" style="left:637.4px;top:45.6px;" width="3.4" height="2.1" viewBox="0 0 3.4 2.1"><path d="M0.2 0.2h3.0l-1.5 1.5z" fill="#666"/></svg>
<svg class="b" style="left:592.6px;top:53.8px;" width="9.4" height="8" viewBox="0 0 9.4 8"><rect x=".5" y=".5" width="8.4" height="7" fill="#fff" stroke="#555" stroke-width=".8"/><path d="M.5 1.4H8.9" stroke="#555" stroke-width="1"/>
<path d="M4.7 2.6V6.2M3.2 4.8L4.7 6.3L6.2 4.8" stroke="#2e75c8" stroke-width=".8" fill="none"/></svg>
<span class="t u" style="top:54px;font-size:7.1px;line-height:10px;color:#444;left:603.5px;letter-spacing:-0.44px;">Fill</span>
<svg class="b" style="left:613.7px;top:57.4px;" width="3.4" height="2.1" viewBox="0 0 3.4 2.1"><path d="M0.2 0.2h3.0l-1.5 1.5z" fill="#666"/></svg>
<svg class="b" style="left:592.4px;top:66.0px;" width="10" height="9" viewBox="0 0 10 9"><path d="M5.6 .6L9 3.8L4.6 8.2H2.6L.8 6.4z" fill="#fff" stroke="#444" stroke-width=".8"/><path d="M2.6 3.8L6 7" stroke="#444" stroke-width=".7"/></svg>
<span class="t u" style="top:66px;font-size:7.1px;line-height:10px;color:#444;left:603.5px;letter-spacing:-0.37px;">Clear</span>
<svg class="b" style="left:621.1px;top:70.0px;" width="3.4" height="2.1" viewBox="0 0 3.4 2.1"><path d="M0.2 0.2h3.0l-1.5 1.5z" fill="#666"/></svg>
<span class="t u" style="top:42px;font-size:7.4px;line-height:10px;color:#2e75c8;left:645.6px;">A</span>
<span class="t u" style="top:50px;font-size:7.4px;line-height:10px;color:#333;left:645.8px;">Z</span>
<svg class="b" style="left:651.6px;top:45.6px;" width="12" height="10.4" viewBox="0 0 12 10.4"><path d="M.6 .6H11L7 5V8.6L4.6 9.8V5z" fill="none" stroke="#444" stroke-width=".8"/></svg>
<span class="t u" style="top:61px;font-size:7.1px;line-height:10px;color:#444;left:643.8px;letter-spacing:0.10px;">Sort &amp;</span>
<span class="t u" style="top:71px;font-size:7.1px;line-height:10px;color:#444;left:643.8px;letter-spacing:-0.06px;">Filter</span>
<svg class="b" style="left:660.3px;top:74.6px;" width="3.4" height="2.1" viewBox="0 0 3.4 2.1"><path d="M0.2 0.2h3.0l-1.5 1.5z" fill="#666"/></svg>
<svg class="b" style="left:669.0px;top:41.4px;" width="19" height="18" viewBox="0 0 19 18"><circle cx="11.8" cy="7" r="6" fill="none" stroke="#444" stroke-width=".9"/><path d="M7.6 11.4L.8 17.2" stroke="#444" stroke-width="1"/></svg>
<span class="t u" style="top:61px;font-size:7.1px;line-height:10px;color:#444;left:668.0px;letter-spacing:0.05px;">Find &amp;</span>
<span class="t u" style="top:71px;font-size:7.1px;line-height:10px;color:#444;left:666.7px;letter-spacing:-0.06px;">Select</span>
<svg class="b" style="left:687.1px;top:74.6px;" width="3.4" height="2.1" viewBox="0 0 3.4 2.1"><path d="M0.2 0.2h3.0l-1.5 1.5z" fill="#666"/></svg>
<svg class="b" style="left:77.6px;top:5.0px;" width="11" height="10" viewBox="0 0 11 10"><path d="M.6 .6H8.4L10 2.2V9.4H.6z" fill="none" stroke="#fff" stroke-width=".9"/><path d="M2.6 .6V3.6H7.4V.6M2.6 9.4V6H7.6V9.4" fill="none" stroke="#fff" stroke-width=".8"/></svg>
<svg class="b" style="left:94.8px;top:5.0px;" width="11" height="10" viewBox="0 0 11 10"><path d="M10 5V2.2L8.4 .6H.6V9.4H4.6" fill="none" stroke="#fff" stroke-width=".9"/><path d="M2.6 .6V3.6H7.4V.6" fill="none" stroke="#fff" stroke-width=".8"/><path d="M5.4 9.4L6 7.4L9.4 4L10.6 5.2L7.2 8.6z" fill="none" stroke="#fff" stroke-width=".7"/></svg>
<svg class="b" style="left:113.0px;top:5.4px;" width="9.4" height="9.4" viewBox="0 0 9.4 9.4"><path d="M.8 .8V4H4" fill="none" stroke="#fff" stroke-width="1"/><path d="M1 3.8C3.4 1.2 8.4 2.4 8.4 6C8.4 7.4 7.4 8.4 5.6 9" fill="none" stroke="#fff" stroke-width="1"/></svg>
<svg class="b" style="left:125.0px;top:9.4px;" width="3.6" height="2.2" viewBox="0 0 3.6 2.2"><path d="M0.2 0.2h3.2l-1.6 1.6z" fill="#fff"/></svg>
<svg class="b" style="left:134.6px;top:5.4px;" width="9.6" height="9.4" viewBox="0 0 9.6 9.4"><path d="M8.8 .8V4H5.6" fill="none" stroke="rgba(255,255,255,.35)" stroke-width="1"/><path d="M8.6 3.8C6.2 1.2 1.2 2.4 1.2 6C1.2 7.4 2.2 8.4 4 9" fill="none" stroke="rgba(255,255,255,.35)" stroke-width="1"/></svg>
<svg class="b" style="left:146.1px;top:9.4px;" width="3.6" height="2.2" viewBox="0 0 3.6 2.2"><path d="M0.2 0.2h3.2l-1.6 1.6z" fill="rgba(255,255,255,.35)"/></svg>
<svg class="b" style="left:155.2px;top:4.6px;" width="8" height="11" viewBox="0 0 8 11"><circle cx="3.4" cy="2.4" r="1.8" fill="none" stroke="#fff" stroke-width=".7"/><path d="M2.6 6.4V2.6C2.6 1.6 4.2 1.6 4.2 2.6V5.2L6.4 5.8C7 6 7.2 6.4 7 7.2L6.4 10.2H2.8L.8 7.4C.4 6.6 1.4 6 2 6.8z" fill="none" stroke="#fff" stroke-width=".8"/></svg>
<svg class="b" style="left:167.2px;top:9.4px;" width="3.6" height="2.2" viewBox="0 0 3.6 2.2"><path d="M0.2 0.2h3.2l-1.6 1.6z" fill="#fff"/></svg>
<svg class="b" style="left:177.2px;top:4.8px;" width="9" height="10.6" viewBox="0 0 9 10.6"><path d="M5.2 .6H.6V9.8H3.4M5.2 .6L7.6 3V5M5.2 .6V3H7.6" fill="none" stroke="#fff" stroke-width=".8"/><circle cx="5.9" cy="6.1" r="1.2" fill="#fff"/><path d="M3.6 10.2C3.6 7.4 8.2 7.4 8.2 10.2z" fill="#fff"/></svg>
<svg class="b" style="left:196.6px;top:8.2px;" width="4" height="5" viewBox="0 0 4 5"><path d="M.4 .5H3.6" stroke="#fff" stroke-width=".6"/><path d="M.4 2H3.6L2 3.8z" fill="#fff"/></svg>
<svg class="b" style="left:667.0px;top:7.0px;" width="9" height="7" viewBox="0 0 9 7"><rect x=".5" y=".5" width="7.6" height="5.6" fill="none" stroke="#fff" stroke-width=".8"/><path d="M.5 1.6H8.1" stroke="#fff" stroke-width=".8"/><path d="M3 4.6L4.3 3L5.6 4.6" fill="none" stroke="#fff" stroke-width=".7"/></svg>
<div class="b" style="left:695.8px;top:10.0px;width:6.2px;height:0.9px;background:#fff;"></div>
<svg class="b" style="left:722.4px;top:7.0px;" width="8" height="7" viewBox="0 0 8 7"><rect x=".5" y="1.6" width="5" height="4.6" fill="none" stroke="#fff" stroke-width=".8"/><path d="M1.8 1.6V.5H6.8V5H5.6" fill="none" stroke="#fff" stroke-width=".8"/></svg>
<svg class="b" style="left:750.6px;top:7.2px;" width="7" height="7" viewBox="0 0 7 7"><path d="M.6 .6L6.2 6.2M6.2 .6L.6 6.2" stroke="#fff" stroke-width=".8"/></svg>
<div class="b" style="left:2.5px;top:99.8px;width:60.0px;height:13.2px;background:#fff;border:1px solid #e0e0e0;box-sizing:border-box;"></div>
<span class="t c" style="top:102px;font-size:7.2px;line-height:10px;color:#333;left:6.3px;letter-spacing:-0.31px;">G90</span>
<svg class="b" style="left:56.5px;top:105.9px;" width="3.0" height="1.9" viewBox="0 0 3.0 1.9"><path d="M0.2 0.2h2.6l-1.3 1.3z" fill="#777"/></svg>
<div class="b" style="left:72.2px;top:103.5px;width:0.9px;height:0.9px;background:#bdbdbd;"></div>
<div class="b" style="left:72.2px;top:105.8px;width:0.9px;height:0.9px;background:#bdbdbd;"></div>
<div class="b" style="left:72.2px;top:108.1px;width:0.9px;height:0.9px;background:#bdbdbd;"></div>
<div class="b" style="left:82.0px;top:99.8px;width:64.0px;height:13.2px;background:#fff;border:1px solid #e0e0e0;box-sizing:border-box;"></div>
<svg class="b" style="left:89.8px;top:104.0px;" width="6" height="6" viewBox="0 0 6 6"><path d="M.6 .6L5 5M5 .6L.6 5" stroke="#bdbdbd" stroke-width=".8"/></svg>
<svg class="b" style="left:110.4px;top:104.0px;" width="7" height="6" viewBox="0 0 7 6"><path d="M.6 3L2.6 5L6.2 .8" fill="none" stroke="#bdbdbd" stroke-width=".8"/></svg>
<span class="t u" style="top:101px;font-size:8.4px;line-height:11px;color:#555;left:132.6px;font-style:italic;font-family:"Liberation Serif",serif;">f</span>
<span class="t u" style="top:104px;font-size:5.6px;line-height:8px;color:#555;left:135.4px;font-style:italic;font-family:"Liberation Serif",serif;">x</span>
<div class="b" style="left:149.5px;top:99.8px;width:615.0px;height:13.2px;background:#fff;border:1px solid #e0e0e0;box-sizing:border-box;"></div>
<span class="t c" style="top:102px;font-size:7.2px;line-height:10px;color:#333;left:155.5px;letter-spacing:0.22px;">&quot;Total&quot;</span>
<svg class="b" style="left:757.2px;top:104.8px;" width="6" height="4" viewBox="0 0 6 4"><path d="M.6 .6L3 3L5.4 .6" fill="none" stroke="#444" stroke-width="1.1"/></svg>
<div class="b" style="left:604.0px;top:353.2px;width:13.6px;height:13.2px;background:#fff;border:1px solid #b9cfc3;box-sizing:border-box;"></div>
<svg class="b" style="left:605.6px;top:354.6px;" width="10.4" height="10" viewBox="0 0 10.4 10"><rect x="2.6" y="1.2" width="6.6" height="5.8" fill="#fff" stroke="#666" stroke-width=".7"/><path d="M3.6 5.6L6 2.6L8.6 6.4" stroke="#555" stroke-width=".7" fill="none"/>
<path d="M1.6 8.2H9.4" stroke="#444" stroke-width="1"/><path d="M0.6 5.6C0.4 3 1.6 1 3.8 .6C3.6 2.4 2.8 4.4 0.6 5.6z" fill="#e8964a"/></svg>
<div class="b" style="left:756.0px;top:120.0px;width:12.0px;height:260.6px;background:#e4e4e4;"></div>
<div class="b" style="left:756.0px;top:139.3px;width:0.8px;height:241.3px;background:#dadada;"></div>
<div class="b" style="left:757.0px;top:120.4px;width:9.4px;height:9.4px;background:#fdfdfd;border:1px solid #e3e3e3;box-sizing:border-box;"></div>
<svg class="b" style="left:759.6px;top:123.4px;" width="4.4" height="3.2" viewBox="0 0 4.4 3.2"><path d="M0 3L2.2 .4L4.4 3z" fill="#555"/></svg>
<div class="b" style="left:757.0px;top:201.0px;width:9.6px;height:10.2px;background:#fdfdfd;border:1px solid #dcdcdc;box-sizing:border-box;"></div>
<div class="b" style="left:757.0px;top:371.8px;width:9.4px;height:8.6px;background:#fdfdfd;border:1px solid #e3e3e3;box-sizing:border-box;"></div>
<svg class="b" style="left:759.6px;top:374.8px;" width="4.4" height="3.2" viewBox="0 0 4.4 3.2"><path d="M0 .4L2.2 3L4.4 .4z" fill="#555"/></svg>
<div class="b" style="left:0.0px;top:380.6px;width:768.0px;height:13.2px;background:#e6e6e6;"></div>
<div class="b" style="left:0.0px;top:380.2px;width:757.0px;height:0.9px;background:#cfcfcf;"></div>
<svg class="b" style="left:11.4px;top:385.0px;" width="3" height="5" viewBox="0 0 3 5"><path d="M2.6 .4L.4 2.5L2.6 4.6z" fill="#c9c9c9"/></svg>
<svg class="b" style="left:24.6px;top:385.0px;" width="3" height="5" viewBox="0 0 3 5"><path d="M.4 .4L2.6 2.5L.4 4.6z" fill="#c9c9c9"/></svg>
<div class="b" style="left:47.0px;top:380.6px;width:84.8px;height:12.4px;background:#fff;"></div>
<div class="b" style="left:47.0px;top:392.2px;width:84.8px;height:1.3px;background:#2a7a50;"></div>
<span class="t u" style="top:383px;font-size:7.4px;line-height:10px;color:#1e6e42;left:52.0px;font-weight:700;letter-spacing:0.31px;">Population Pyramid</span>
<svg class="b" style="left:147.0px;top:383.0px;" width="9" height="9" viewBox="0 0 9 9"><circle cx="4.4" cy="4.4" r="3.6" fill="none" stroke="#777" stroke-width=".7"/><path d="M4.4 2.4V6.4M2.4 4.4H6.4" stroke="#777" stroke-width=".7"/></svg>
<div class="b" style="left:459.6px;top:383.6px;width:0.9px;height:0.9px;background:#b0b0b0;"></div>
<div class="b" style="left:459.6px;top:385.8px;width:0.9px;height:0.9px;background:#b0b0b0;"></div>
<div class="b" style="left:459.6px;top:388.0px;width:0.9px;height:0.9px;background:#b0b0b0;"></div>
<div class="b" style="left:459.6px;top:390.2px;width:0.9px;height:0.9px;background:#b0b0b0;"></div>
<div class="b" style="left:467.7px;top:382.8px;width:8.8px;height:9.4px;background:#fdfdfd;border:1px solid #e0e0e0;box-sizing:border-box;"></div>
<svg class="b" style="left:470.4px;top:385.6px;" width="3" height="4" viewBox="0 0 3 4"><path d="M2.6 0L.4 2L2.6 4z" fill="#666"/></svg>
<div class="b" style="left:478.2px;top:382.4px;width:124.8px;height:9.8px;background:#fff;border:1px solid #dcdcdc;box-sizing:border-box;"></div>
<div class="b" style="left:746.7px;top:382.8px;width:8.8px;height:9.4px;background:#fdfdfd;border:1px solid #e0e0e0;box-sizing:border-box;"></div>
<svg class="b" style="left:749.8px;top:385.6px;" width="3" height="4" viewBox="0 0 3 4"><path d="M.4 0L2.6 2L.4 4z" fill="#666"/></svg>
<div class="b" style="left:0.0px;top:393.8px;width:768.0px;height:13.4px;background:#f3f2f1;"></div>
<span class="t u" style="top:397px;font-size:6.6px;line-height:9px;color:#555;left:3.0px;letter-spacing:-0.52px;">Ready</span>
<svg class="b" style="left:28.6px;top:397.0px;" width="9" height="8" viewBox="0 0 9 8"><rect x=".5" y=".5" width="7.8" height="6.8" fill="#fff" stroke="#777" stroke-width=".7"/><rect x=".5" y=".5" width="3" height="2.6" fill="#555"/><path d="M.5 3.2H8.3M3.6 .5V7.3" stroke="#999" stroke-width=".5"/></svg>
<span class="t u" style="top:397px;font-size:6.6px;line-height:9px;color:#555;left:502.8px;letter-spacing:-0.28px;">Average: 77</span>
<span class="t u" style="top:397px;font-size:6.6px;line-height:9px;color:#555;left:542.3px;letter-spacing:-0.27px;">Count: 17</span>
<span class="t u" style="top:397px;font-size:6.6px;line-height:9px;color:#555;left:577.2px;letter-spacing:-0.40px;">Sum: 1232</span>
<div class="b" style="left:614.8px;top:394.4px;width:17.4px;height:12.6px;background:#c8c8c8;"></div>
<svg class="b" style="left:619.0px;top:397.0px;" width="9.4" height="8" viewBox="0 0 9.4 8"><path d="M0.50 0.5V7.5M3.30 0.5V7.5M6.10 0.5V7.5M8.90 0.5V7.5M0.5 0.50H8.9M0.5 2.83H8.9M0.5 5.17H8.9M0.5 7.50H8.9" stroke="#555" stroke-width="0.6" fill="none"/></svg>
<svg class="b" style="left:637.2px;top:397.0px;" width="9.4" height="8" viewBox="0 0 9.4 8"><rect x=".5" y=".5" width="8.4" height="7" fill="none" stroke="#666" stroke-width=".7"/><rect x="2.4" y="2" width="4.6" height="5.4" fill="none" stroke="#666" stroke-width=".6"/></svg>
<svg class="b" style="left:654.7px;top:397.0px;" width="9.4" height="8" viewBox="0 0 9.4 8"><rect x=".5" y=".5" width="8.4" height="7" fill="none" stroke="#666" stroke-width=".7"/><path d="M.5 4.6H5.2V.5M5.2 4.6H8.9" fill="none" stroke="#666" stroke-width=".6"/></svg>
<div class="b" style="left:671.0px;top:400.8px;width:4.6px;height:0.9px;background:#555;"></div>
<div class="b" style="left:678.0px;top:400.9px;width:60.0px;height:0.7px;background:#9a9a9a;"></div>
<div class="b" style="left:709.8px;top:397.4px;width:3.4px;height:7.4px;background:#5f5f5f;"></div>
<div class="b" style="left:739.0px;top:400.8px;width:4.4px;height:0.9px;background:#555;"></div>
<div class="b" style="left:740.8px;top:399.0px;width:0.9px;height:4.4px;background:#555;"></div>
<span class="t u" style="top:397px;font-size:6.6px;line-height:9px;color:#555;left:749.8px;letter-spacing:-0.60px;">150%</span>
<div class="b" style="left:0.0px;top:407.0px;width:768.0px;height:5.0px;background:#0a0a0a;"></div>
<div class="b" style="left:28.8px;top:407.0px;width:206.4px;height:5.0px;background:#fbfbfb;"></div>
<div class="b" style="left:384.0px;top:407.0px;width:31.2px;height:5.0px;background:#3c3c3c;"></div>
<span class="t u" style="top:409px;font-size:6.6px;line-height:9px;color:#bbb;left:701.0px;letter-spacing:0.33px;">11:46 AM</span>
</div></body></html>
